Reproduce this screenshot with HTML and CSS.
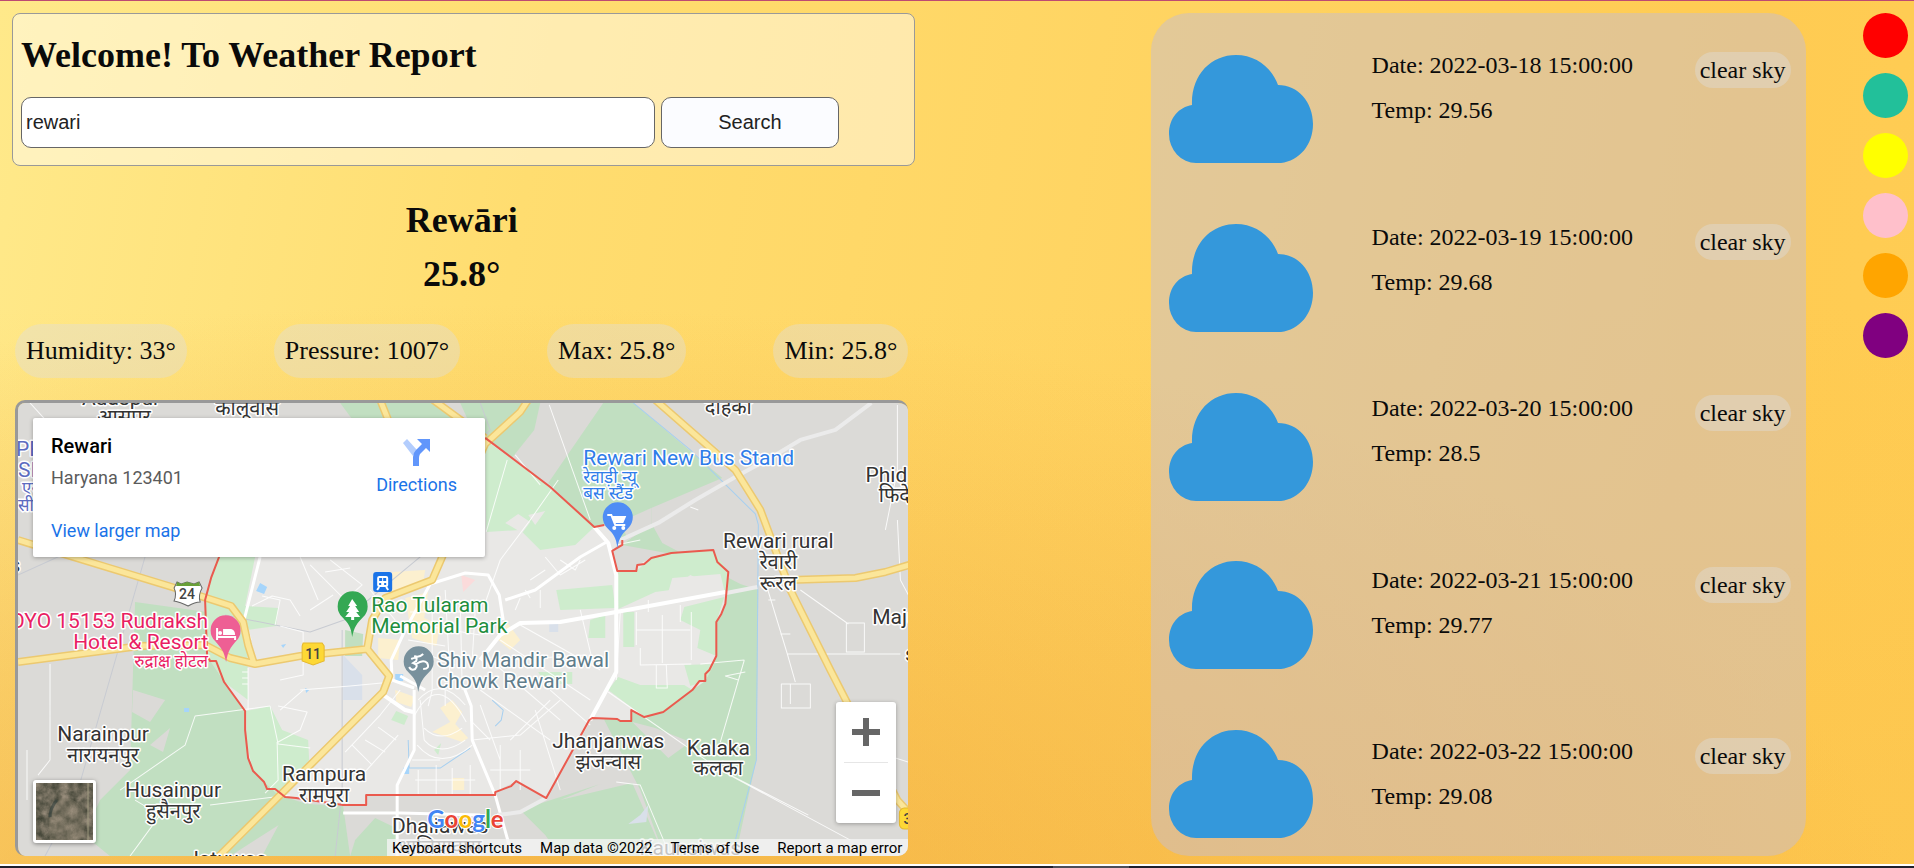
FILE: index.html
```html
<!DOCTYPE html>
<html lang="en">
<head>
<meta charset="utf-8">
<title>Weather Report</title>
<meta name="viewport" content="width=device-width, initial-scale=1">
<link rel="stylesheet" href="styles.css">
</head>
<body>
<svg class="defs" aria-hidden="true">
  <symbol id="cloud" viewBox="0 0 144 108">
    <path d="M27 108A27 29 0 0 1 0 79C0 63 10 52 23 50C22 20 42 0 67 0C87 0 103 13 109 30C129 30 144 47 144 69C144 90 130 106 112 108Z" fill="#3498db"/>
  </symbol>
</svg>
<main class="page">
  <section class="current">
    <form class="search">
      <h1 class="title"><label for="city">Welcome! To Weather Report</label></h1>
      <div class="search-row">
        <input class="search-input" id="city" type="text" value="rewari">
        <button class="search-button" type="button">Search</button>
      </div>
    </form>
    <div class="place">
      <h2 class="title">Rewāri</h2>
      <h2 class="title">25.8°</h2>
    </div>
    <ul class="stats">
      <li class="stat">Humidity: 33°</li>
      <li class="stat">Pressure: 1007°</li>
      <li class="stat">Max: 25.8°</li>
      <li class="stat">Min: 25.8°</li>
    </ul>
    <div class="map">
      <svg class="map-canvas" viewBox="18 403 890 453" preserveAspectRatio="xMidYMid slice" role="img" aria-label="Map of Rewari">
        <rect x="0" y="380" width="930" height="500" fill="#dbdad7"/>
        <g fill="#c1dfc1">
          <path d="M603 403H633L722 478L651 508V523L620 540L594 527L548 483Z"/>
          <path d="M460 403H540L534 430L510 460L470 425Z"/>
          <path d="M340 403H440L470 430H360Z"/>
          <path d="M622 545L651 523L662 543L740 584L758 590L756 760L735 856H664L640 790L604 720L640 650L716 562Z"/>
          <path d="M520 810L600 784L560 800L632 783L664 856H560L545 835Z"/>
          <path d="M135 602L207 612L210 661L245 711L250 760L285 797L310 805L230 856H110L84 835L100 800L130 770Z"/>
          <path d="M290 803L343 806L350 856H262Z"/><path d="M355 840L375 818L400 830L392 856H350Z"/>
        </g>
        <path fill="#dbdad7" d="M620 522L651 508V525L628 540ZM133 690L165 700L150 722L132 712ZM150 745L170 728L163 752ZM632 722L655 728L690 742L668 758ZM560 780H632L610 786Z"/>
        <path fill="#e9e8e6" d="M485 438L550 487L594 527L604 525L621 540L612 551L617 571H636L637 565L651 558L671 553L713 550L717 562L728 572L725 604L716 622V656L705 681L692 690L663 712L644 717L631 710V721L592 718L546 798L516 781L495 792V795H366V805H343L285 797L264 782L248 758L245 711L224 682L216 661L207 655L205 600L219 557L240 510L300 450L440 425Z"/>
        <g fill="#ceeccd">
          <path d="M485 440L550 487L594 527L575 545L540 550L520 530L486 532Z"/>
          <path d="M217 557H255L245 606L278 608L276 626L247 630L248 700L224 682L207 655L205 600Z"/>
          <path d="M246 711L270 706L282 730L308 740L309 760L280 797L253 771L247 745Z"/>
          <path d="M556 590L612 585L615 608L560 610Z"/>
          <path d="M617 571H636L651 558L671 553L713 550L728 572L727 592L690 575L670 590L655 592L618 609Z"/>
          <path d="M684 607L724 597L716 622V656L697 648L700 630L680 620ZM618 677L640 685H684L692 690L663 712L644 717L608 690ZM684 665L714 664L705 681L690 686ZM623 612H634V647H623ZM590 620L605 615V638H588ZM538 672H572V684H545Z"/>
          <path d="M391 720L396 711L408 716L404 725Z"/><path d="M434 750L441 743L438 755Z"/>
        </g>
        <path fill="#c1dfc1" d="M345 630L363 634L362 656H345Z"/>
        <path fill="#e9e8e6" d="M505 523L518 514L530 522L522 533ZM528 515L545 511L535 525ZM672 578L720 574L724 590L690 600L668 592Z"/>
        <g fill="#fcf0cf">
          <path d="M392 572L425 570L422 588L390 598ZM405 598L428 592L424 618L440 625L436 646L412 638ZM378 638L400 640L398 660L378 658ZM395 690L415 697L411 707L396 702ZM440 708L452 700L462 712L455 724L468 738L462 742L432 732L450 722Z"/>
          <path d="M452 778H464V790H452ZM505 620L520 640L510 650L498 640Z"/>
        </g>
        <path fill="#fbdbdb" d="M461 575L475 580L463 592Z"/>
        <path fill="#d9e0ea" d="M343 655L362 675V700H343ZM549 624H558V632H549ZM640 815L648 805L646 822L628 824Z"/>
        <path fill="#a6d5fb" d="M395 674H403V681H395ZM260 583L267 587L264 594L256 591ZM403 768L409 765V774H402ZM184 708H189V712H184ZM281 645L286 644L283 648ZM305 688L309 690L306 693Z"/>
        <path class="water" d="M633 403L690 450L755 514L758 525L756 760L735 840L730 856M408 740L409 768L440 768L470 748M492 700L503 710L501 720L495 726"/>
        <path class="rail" d="M18 575L60 556M145 557L75 800L45 856M225 615L310 632L344 620L420 557L445 520M342 630V790L335 856M480 403L490 430L400 520"/>
        <g class="minor">
          <path d="M30 403L50 425M50 664V760L38 775M27 750V800M120 790L185 745L195 716L240 710L270 706M210 805L290 795M130 856L160 815L135 800M277 742L278 780L265 793"/>
          <path d="M248 668V710M242 672H248M242 678H248M242 684H248M270 706L278 744L310 748M278 706L307 712L300 730L278 742M262 596L280 600L275 625M300 557L318 600M310 565L345 600L362 585L330 560M325 572L350 568M333 595L310 610M252 606L272 596L290 600L300 616M280 626L303 632V675L280 680M303 690L280 710"/>
          <path d="M345 752L380 715L400 690M362 775L398 735M352 745L372 765M365 740L385 752M378 727L396 740M370 590L395 620M300 690L350 686L392 682M408 640L445 646M415 650L455 665M420 625L480 635M410 612L470 612M432 600V690M445 590L450 680M460 600L462 690M475 610L472 660"/>
          <path d="M418 700Q440 675 465 705M414 716Q438 670 466 722M417 745Q440 772 472 745M424 740Q440 758 465 740M424 728Q440 744 462 728M412 760H440M420 700L424 740M432 690L428 706M445 690V706M470 720L490 740M472 740L520 735L560 700M480 690L550 740M490 660L560 720M500 640L590 700M520 625L600 670M480 705L500 760M500 745V790M490 770H530M520 750V790M535 710L560 790M550 690L590 725M550 700L510 740M508 660L585 655M415 780H475M418 770V795M436 765V795M452 768V795M470 765V795"/>
          <path d="M507 460L486 532M549 405L590 520M558 480L530 520L500 560L486 600M540 485L515 455M540 590V608M520 598L515 610M525 590L530 598M545 570L530 580M560 560L575 570L580 560M620 612L616 680M636 612V645M662 615V663M691 612V660M636 630H690M640 648V665L691 664M656 665V688H667L666 665M648 600V612M680 605V622M616 545L640 540M545 557L560 575L585 560"/>
          <path d="M608 692L720 770L808 815M744 660L720 742M744 660L700 664M745 672L725 676L738 680M766 585L787 654H900M787 654L795 682M781 684H810V708H781ZM790 684V704M846 623H864V652H846ZM800 590L848 624M897 405V470L885 530M897 520L900 580L908 595M616 782L640 785L670 856M720 770L850 840M768 600H775M780 634H790M690 507L698 510M870 750L908 762M580 610L592 660"/>
        </g>
        <g class="street">
          <path d="M430 584L465 573L488 575L499 595L503 620M608 541L580 557L535 590L505 600M430 584L405 630L391 660L392 680L414 688M400 676L425 690M464 688L471 706L472 740L495 795L512 856M414 690L414 750L397 785V856M343 813H400L480 815M260 557L244 620L250 640"/>
        </g>
        <path class="outer" d="M871 403L835 430L800 440L770 458L735 477L695 500L658 523L620 540M726 593L757 587M497 815L520 812L546 798"/>
        <path class="avenue" d="M594 527L608 543L616 575V672L590 720M382 694L405 710L413 712"/>
        <path class="avenue" d="M480 660L500 635L520 623L560 622L616 612L725 592"/>
        <g class="highway-edge"><path id="hw" d="M18 540L60 553L175 588L231 606L243 622L248 645L254 664M18 662L140 646L205 645L230 658L255 664L300 656L367 649L389 676L383 692L310 765L280 795L215 860M367 649L372 620L385 598L432 580L442 557L460 500L485 444L520 412L528 400M380 400L388 420M433 400L485 438M655 400L735 470L760 510L790 590L830 670L848 705L897 800L915 820M790 580L855 578L885 572L912 564"/></g>
        <g class="highway-fill"><use href="#hw"/></g>
        <path class="boundary" d="M485 438L550 487L594 527L604 525M622 540V545L612 551L617 571H636L637 565L644 564L651 558L671 553L713 550L717 562L728 572L725 604L721 614L716 622V656L709 670L705 674V681H699L692 690L663 712L644 717L631 710V721H620L617 719L592 718L589 720L546 798L516 781L511 786L495 792V795H366V805H343L296 798L285 797L275 789H267L264 782L253 771L248 758L245 730V711L224 682L216 661H210L207 655L205 600L211 578L219 557"/>
        <g class="label">
          <text x="121" y="405">Adaspur</text><text class="hi" x="124" y="424">आसपुर</text>
          <text class="hi" x="247" y="415">कालूवास</text><text class="hi" x="728" y="414">दोहकी</text>
          <text x="886" y="482">Phid</text><text class="hi" x="894" y="502">फिदे</text>
          <text x="778" y="548">Rewari rural</text><text class="hi" x="778" y="569">रेवारी</text><text class="hi" x="778" y="590">रूरल</text>
          <text x="895" y="624">Maju</text><text x="910" y="661">s</text>
          <text x="15" y="572">s</text>
          <text x="103" y="741">Narainpur</text><text class="hi" x="103" y="762">नारायनपुर</text>
          <text x="173" y="797">Husainpur</text><text class="hi" x="173" y="818">हुसैनपुर</text>
          <text x="324" y="781">Rampura</text><text class="hi" x="324" y="802">रामपुरा</text>
          <text x="608" y="748">Jhanjanwas</text><text class="hi" x="608" y="769">झंजन्वास</text>
          <text x="718" y="755">Kalaka</text><text class="hi" x="718" y="775">कलका</text>
          <text x="440" y="833">Dhaliawas</text><text class="hi" x="440" y="854">धालियावास</text>
          <text x="227" y="866">Jatuwas</text><text x="690" y="855">Kaunsiwas</text>
        </g>
        <g class="label transit"><text x="16" y="456">PE</text><text x="18" y="477">SI</text><text class="hi small" x="22" y="494">एस</text><text class="hi small" x="18" y="511">सी</text></g>
        <g class="label shop"><text x="583" y="465">Rewari New Bus Stand</text><text class="hi small" x="583" y="483">रेवाड़ी न्यू</text><text class="hi small" x="583" y="499">बस स्टैंड</text></g>
        <g class="label hotel"><text x="208" y="628">OYO 15153 Rudraksh</text><text x="208" y="649">Hotel &amp; Resort</text><text class="hi small" x="208" y="667">रुद्राक्ष होटल</text></g>
        <g class="label park"><text x="371" y="612">Rao Tularam</text><text x="371" y="633">Memorial Park</text></g>
        <g class="label temple"><text x="437" y="667">Shiv Mandir Bawal</text><text x="437" y="688">chowk Rewari</text></g>
        <path fill="#ee5f94" d="M226 662C224 651 221 648 215 641A15 15 0 1 1 236 641C230 648 228 651 226 662Z"/>
        <path fill="none" stroke="#fff" stroke-width="2" d="M217 628V640M217 637H235V640"/><path fill="#fff" d="M223 629H231Q235 630 235 635H223Z"/><circle cx="220" cy="633" r="2" fill="#fff"/>
        <path fill="#34a853" d="M352 637C351 627 348 623 342 617A15 15 0 1 1 363 617C357 623 354 627 352 637Z"/>
        <path fill="#fff" d="M352 599L357 606H355L359 612H356L360 617H354V620H351V617H345L349 612H346L350 606H348Z"/>
        <path fill="#78909c" d="M418 692C417 682 414 678 408 672A15 15 0 1 1 429 672C423 678 420 682 418 692Z"/>
        <path fill="none" stroke="#fff" stroke-width="2" d="M411 659Q418 656 416 661L413 663Q419 665 415 669Q411 671 409 667M416 664Q423 659 427 663Q430 669 423 669M414 656Q419 658 423 654"/>
        <path fill="#4f8df5" d="M617 548C616 537 613 534 607 528A15 15 0 1 1 628 528C622 534 619 537 617 548Z"/>
        <path fill="none" stroke="#fff" stroke-width="2" d="M607 515H611L615 525H625"/><path fill="#fff" d="M612 516H626L623 523H614Z"/><circle cx="614" cy="528" r="2" fill="#fff"/><circle cx="623" cy="528" r="2" fill="#fff"/>
        <rect x="373" y="572" width="19" height="20" rx="3" fill="#1a73e8"/><rect x="377" y="576" width="11" height="11" rx="2" fill="#fff"/><path fill="#1a73e8" d="M379 578H382V581H379ZM383 578H386V581H383ZM379 583H381V585H379ZM384 583H386V585H384Z"/><path stroke="#fff" stroke-width="2" d="M379 587L377 590M386 587L388 590"/>
        <path fill="#fff" stroke="#666" stroke-width="1" d="M177 582L181 584L187 582L194 584L199 582L202 588Q198 595 200 602Q195 602 188 606Q180 602 174 601Q177 594 174 588Z"/><path fill="#689f38" d="M177 582L181 584L187 582L194 584L199 582L200 586H176Z"/>
        <text class="shield" x="187" y="599">24</text>
        <path fill="#fdd835" stroke="#e5b82e" d="M303 643H322L324 646V661L313 665L302 661V646Z"/><text class="shield" x="313" y="659">11</text>
        <rect x="899" y="808" width="24" height="21" rx="5" fill="#fdd835" stroke="#e5b82e"/><text class="shield" x="907" y="824">3</text>
        <g class="logo"><text x="427" y="828"><tspan fill="#4285f4">G</tspan><tspan fill="#ea4335">o</tspan><tspan fill="#fbbc05">o</tspan><tspan fill="#4285f4">g</tspan><tspan fill="#34a853">l</tspan><tspan fill="#ea4335">e</tspan></text></g>
      </svg>
      <div class="place-card">
        <div class="place-text">
          <strong class="place-name">Rewari</strong>
          <span class="place-address">Haryana 123401</span>
          <a class="link" href="#map">View larger map</a>
        </div>
        <a class="link directions" href="#directions">
          <svg class="directions-icon" viewBox="0 0 27 27" aria-hidden="true"><path fill="#b3cdfd" d="M0 4L4 0L14 11L10 17Z"/><path fill="#6196fb" d="M27 0V13L23 9L17 15Q16 17 16 19V27H10V18Q10 14 13 11L19 5L14 0Z"/></svg>
          Directions
        </a>
      </div>
      <button class="satellite" type="button" aria-label="Show satellite imagery">
        <svg class="satellite-image" viewBox="0 0 57 57" aria-hidden="true">
          <filter id="ground" x="0" y="0" width="1" height="1" color-interpolation-filters="sRGB"><feTurbulence type="fractalNoise" baseFrequency=".12" numOctaves="4" seed="4"/><feColorMatrix values=".5 0 0 0 .18 .42 0 0 0 .2 .4 0 0 0 .15 0 0 0 0 1"/></filter>
          <rect width="57" height="57" fill="#6f6d58"/><rect width="57" height="57" filter="url(#ground)"/>
          <path d="M14 57Q10 34 20 20Q30 9 44 22Q54 42 44 57Z" fill="#8e8470" opacity=".3"/><path d="M52 0V57" stroke="#a09b80"/><path d="M14 34Q14 25 21 17" fill="none" stroke="#354340" stroke-width="3" opacity=".6"/>
        </svg>
      </button>
      <div class="zoom">
        <button class="zoom-button" type="button" aria-label="Zoom in"><svg viewBox="0 0 28 28" aria-hidden="true"><path fill="#666" d="M11 0H17V11H28V17H17V28H11V17H0V11H11Z"/></svg></button>
        <button class="zoom-button" type="button" aria-label="Zoom out"><svg viewBox="0 0 28 28" aria-hidden="true"><path fill="#666" d="M0 11H28V17H0Z"/></svg></button>
      </div>
      <div class="credits">
        <button class="credit" type="button">Keyboard shortcuts</button>
        <span class="credit">Map data ©2022</span>
        <a class="credit" href="#terms">Terms of Use</a>
        <a class="credit" href="#report">Report a map error</a>
      </div>
    </div>
  </section>
  <section class="forecast" aria-label="Forecast">
    <div class="clouds" aria-hidden="true">
      <svg class="cloud"><use href="#cloud"/></svg>
      <svg class="cloud"><use href="#cloud"/></svg>
      <svg class="cloud"><use href="#cloud"/></svg>
      <svg class="cloud"><use href="#cloud"/></svg>
      <svg class="cloud"><use href="#cloud"/></svg>
    </div>
    <ul class="days">
      <li class="day"><div class="day-text"><p>Date: 2022-03-18 15:00:00</p><p>Temp: 29.56</p></div><span class="sky">clear sky</span></li>
      <li class="day"><div class="day-text"><p>Date: 2022-03-19 15:00:00</p><p>Temp: 29.68</p></div><span class="sky">clear sky</span></li>
      <li class="day"><div class="day-text"><p>Date: 2022-03-20 15:00:00</p><p>Temp: 28.5</p></div><span class="sky">clear sky</span></li>
      <li class="day"><div class="day-text"><p>Date: 2022-03-21 15:00:00</p><p>Temp: 29.77</p></div><span class="sky">clear sky</span></li>
      <li class="day"><div class="day-text"><p>Date: 2022-03-22 15:00:00</p><p>Temp: 29.08</p></div><span class="sky">clear sky</span></li>
    </ul>
  </section>
  <nav class="themes" aria-label="Theme colour">
    <button class="theme red" type="button" aria-label="Red"></button>
    <button class="theme green" type="button" aria-label="Green"></button>
    <button class="theme yellow" type="button" aria-label="Yellow"></button>
    <button class="theme pink" type="button" aria-label="Pink"></button>
    <button class="theme orange" type="button" aria-label="Orange"></button>
    <button class="theme purple" type="button" aria-label="Purple"></button>
  </nav>
</main>
<footer class="edge"><span class="edge-mark"></span></footer>
</body>
</html>
```
FILE: styles.css
```css
* { box-sizing: border-box; }

body {
  margin: 0;
  min-height: 100vh;
  display: flex;
  flex-direction: column;
  border-top: 1px solid #bd4a72;
  font-family: "Liberation Serif", "Times New Roman", serif;
  color: #0a0a0a;
}

h1, h2, p, ul { margin: 0; padding: 0; }
ul { list-style: none; }
button { font: inherit; color: inherit; cursor: pointer; }

.defs { position: absolute; width: 0; height: 0; }

.page {
  flex: 1;
  display: flex;
  align-items: stretch;
  padding: 12px 6px 8px 12px;
  background:
    linear-gradient(to bottom, rgba(244, 170, 56, 0) 35%, rgba(244, 170, 56, .2) 100%),
    radial-gradient(ellipse 75% 75% at 25% 110%, rgba(240, 166, 56, .7), rgba(240, 166, 56, 0)),
    linear-gradient(100deg, #ffe98a 0%, #ffdd70 27%, #ffd360 60%, #ffcb52 85%, #ffcd54 100%);
}

.current {
  width: 47.2vw;
  display: flex;
  flex-direction: column;
}

.search {
  padding: 21px 8px 17px;
  border: 1px solid #999;
  border-radius: 8px;
  background: rgba(255, 255, 255, .45);
}

.title {
  font-size: 36px;
  line-height: 40px;
  font-weight: bold;
}

.search-row {
  display: flex;
  gap: 6px;
  margin-top: 22px;
}

.search-input, .search-button {
  height: 51px;
  border: 1px solid #666;
  border-radius: 10px;
  font: 20px "Liberation Sans", Arial, sans-serif;
  color: #222;
}

.search-input { width: 71.6%; padding: 0 4px; background: #fff; }
.search-button { width: 20.1%; background: #fbfcff; }

.place {
  display: flex;
  flex-direction: column;
  gap: 14px;
  padding: 34px 4px 30px 0;
  text-align: center;
}

.stats {
  display: flex;
  justify-content: space-between;
  margin: 0 7px 22px 3px;
}

.stat {
  padding: 0 11px;
  border-radius: 27px;
  font-size: 26px;
  line-height: 54px;
  background: rgba(222, 222, 222, .4);
}

.map {
  position: relative;
  flex: 1;
  min-height: 456px;
  margin: 0 7px 0 3px;
  border-top: 3px solid #999;
  border-left: 3px solid #999;
  border-radius: 10px;
  overflow: hidden;
  font-family: Roboto, sans-serif;
}

.map-canvas {
  position: absolute;
  inset: 0;
  width: 100%;
  height: 100%;
}

.water, .rail, .minor, .street, .outer, .avenue, .highway-edge, .highway-fill, .boundary {
  fill: none;
  stroke-linejoin: round;
}

.water { stroke: #a6cff0; stroke-width: 1; }
.rail { stroke: #c8cbd2; stroke-width: 1; }
.minor { stroke: #fff; stroke-width: 1; opacity: .85; }
.street { stroke: #fff; stroke-width: 3; }
.outer { stroke: #ebebeb; stroke-width: 4; }
.avenue { stroke: #fff; stroke-width: 4; }
.highway-edge { stroke: #ecc970; stroke-width: 8; }
.highway-fill { stroke: #fbe69a; stroke-width: 5; }
.boundary { stroke: #ea5a4e; stroke-width: 2; }

.label {
  font-size: 21px;
  text-anchor: middle;
  fill: #333;
  stroke: #fff;
  stroke-width: 3px;
  stroke-linejoin: round;
  paint-order: stroke;
}

.hi { font-family: "Noto Sans Devanagari", "Noto Sans", sans-serif; font-size: 20px; }
.small { font-size: 17px; }
.transit { fill: #5c6bc0; text-anchor: start; }
.shop { fill: #2f7de9; text-anchor: start; }
.hotel { fill: #e91e63; text-anchor: end; }
.park { fill: #1e8e3e; text-anchor: start; }
.temple { fill: #607d8b; text-anchor: start; }
.shield { font-size: 14px; font-weight: 500; text-anchor: middle; fill: #444; }

.logo {
  font-family: Lato, sans-serif;
  font-size: 24px;
  font-weight: bold;
  stroke: #fff;
  stroke-width: 2px;
  paint-order: stroke;
}

.place-card {
  position: absolute;
  top: 15px;
  left: 15px;
  width: 452px;
  height: 139px;
  display: flex;
  justify-content: space-between;
  padding: 16px 28px 0 18px;
  border-radius: 2px;
  background: #fff;
  box-shadow: 0 1px 4px rgba(0, 0, 0, .3);
  font-size: 18px;
  line-height: 24px;
}

.place-text { display: flex; flex-direction: column; align-items: flex-start; }
.place-name { font-size: 20px; font-weight: 500; color: #000; }
.place-address { margin: 8px 0 29px; color: #5b5b5b; }
.link { color: #1a73e8; text-decoration: none; }
.directions { display: flex; flex-direction: column; align-items: center; gap: 7px; padding-top: 5px; }
.directions-icon { width: 27px; height: 27px; }

.satellite {
  position: absolute;
  left: 15px;
  bottom: 13px;
  width: 63px;
  height: 63px;
  padding: 0;
  border: 3px solid #fff;
  border-radius: 3px;
  overflow: hidden;
  box-shadow: 0 1px 4px rgba(0, 0, 0, .4);
}

.satellite-image { display: block; width: 57px; height: 57px; }

.zoom {
  position: absolute;
  right: 12px;
  bottom: 33px;
  width: 60px;
  padding: 0 8px;
  border-radius: 3px;
  background: #fff;
  box-shadow: 0 1px 4px rgba(0, 0, 0, .3);
}

.zoom-button {
  display: flex;
  align-items: center;
  justify-content: center;
  width: 100%;
  height: 60px;
  padding: 0;
  border: 0;
  background: none;
}

.zoom-button + .zoom-button { height: 61px; border-top: 1px solid #e6e6e6; }
.zoom-button svg { width: 28px; height: 28px; }

.credits {
  position: absolute;
  right: 0;
  bottom: 0;
  display: flex;
  gap: 18px;
  padding: 1px 6px 0 5px;
  background: rgba(245, 245, 245, .75);
  font-size: 15px;
  line-height: 16px;
  white-space: nowrap;
}

.credit {
  padding: 0;
  border: 0;
  background: none;
  color: #000;
  text-decoration: none;
}

.forecast {
  display: flex;
  justify-content: space-between;
  width: 34.2vw;
  margin-left: auto;
  padding: 39px 15px 18px 18px;
  border-radius: 38px;
  background: rgba(200, 190, 206, .5);
}

.clouds {
  display: flex;
  flex-direction: column;
  justify-content: space-between;
  padding-top: 3px;
}

.cloud { width: 144px; height: 108px; }

.days {
  display: flex;
  flex-direction: column;
  justify-content: space-between;
  width: 419px;
  padding-bottom: 10px;
}

.day {
  display: flex;
  justify-content: space-between;
  align-items: flex-start;
  height: 90px;
  font-size: 24px;
}

.day-text { display: flex; flex-direction: column; gap: 19px; line-height: 26px; }
.sky { padding: 0 5px; border-radius: 18px; line-height: 36px; background: rgba(222, 222, 222, .4); }

.themes {
  display: flex;
  flex-direction: column;
  gap: 15px;
  margin-left: 3vw;
}

.theme { width: 45px; height: 45px; padding: 0; border: 0; border-radius: 50%; }
.red { background: #f00; }
.green { background: #22c09a; }
.yellow { background: #ff0; }
.pink { background: pink; }
.orange { background: orange; }
.purple { background: purple; }

.edge { height: 4px; border-top: 2px solid #fff; background: #1f1f2b; }
.edge-mark { display: block; width: 4vw; height: 2px; margin-left: 55vw; background: #4d4d57; }
```
